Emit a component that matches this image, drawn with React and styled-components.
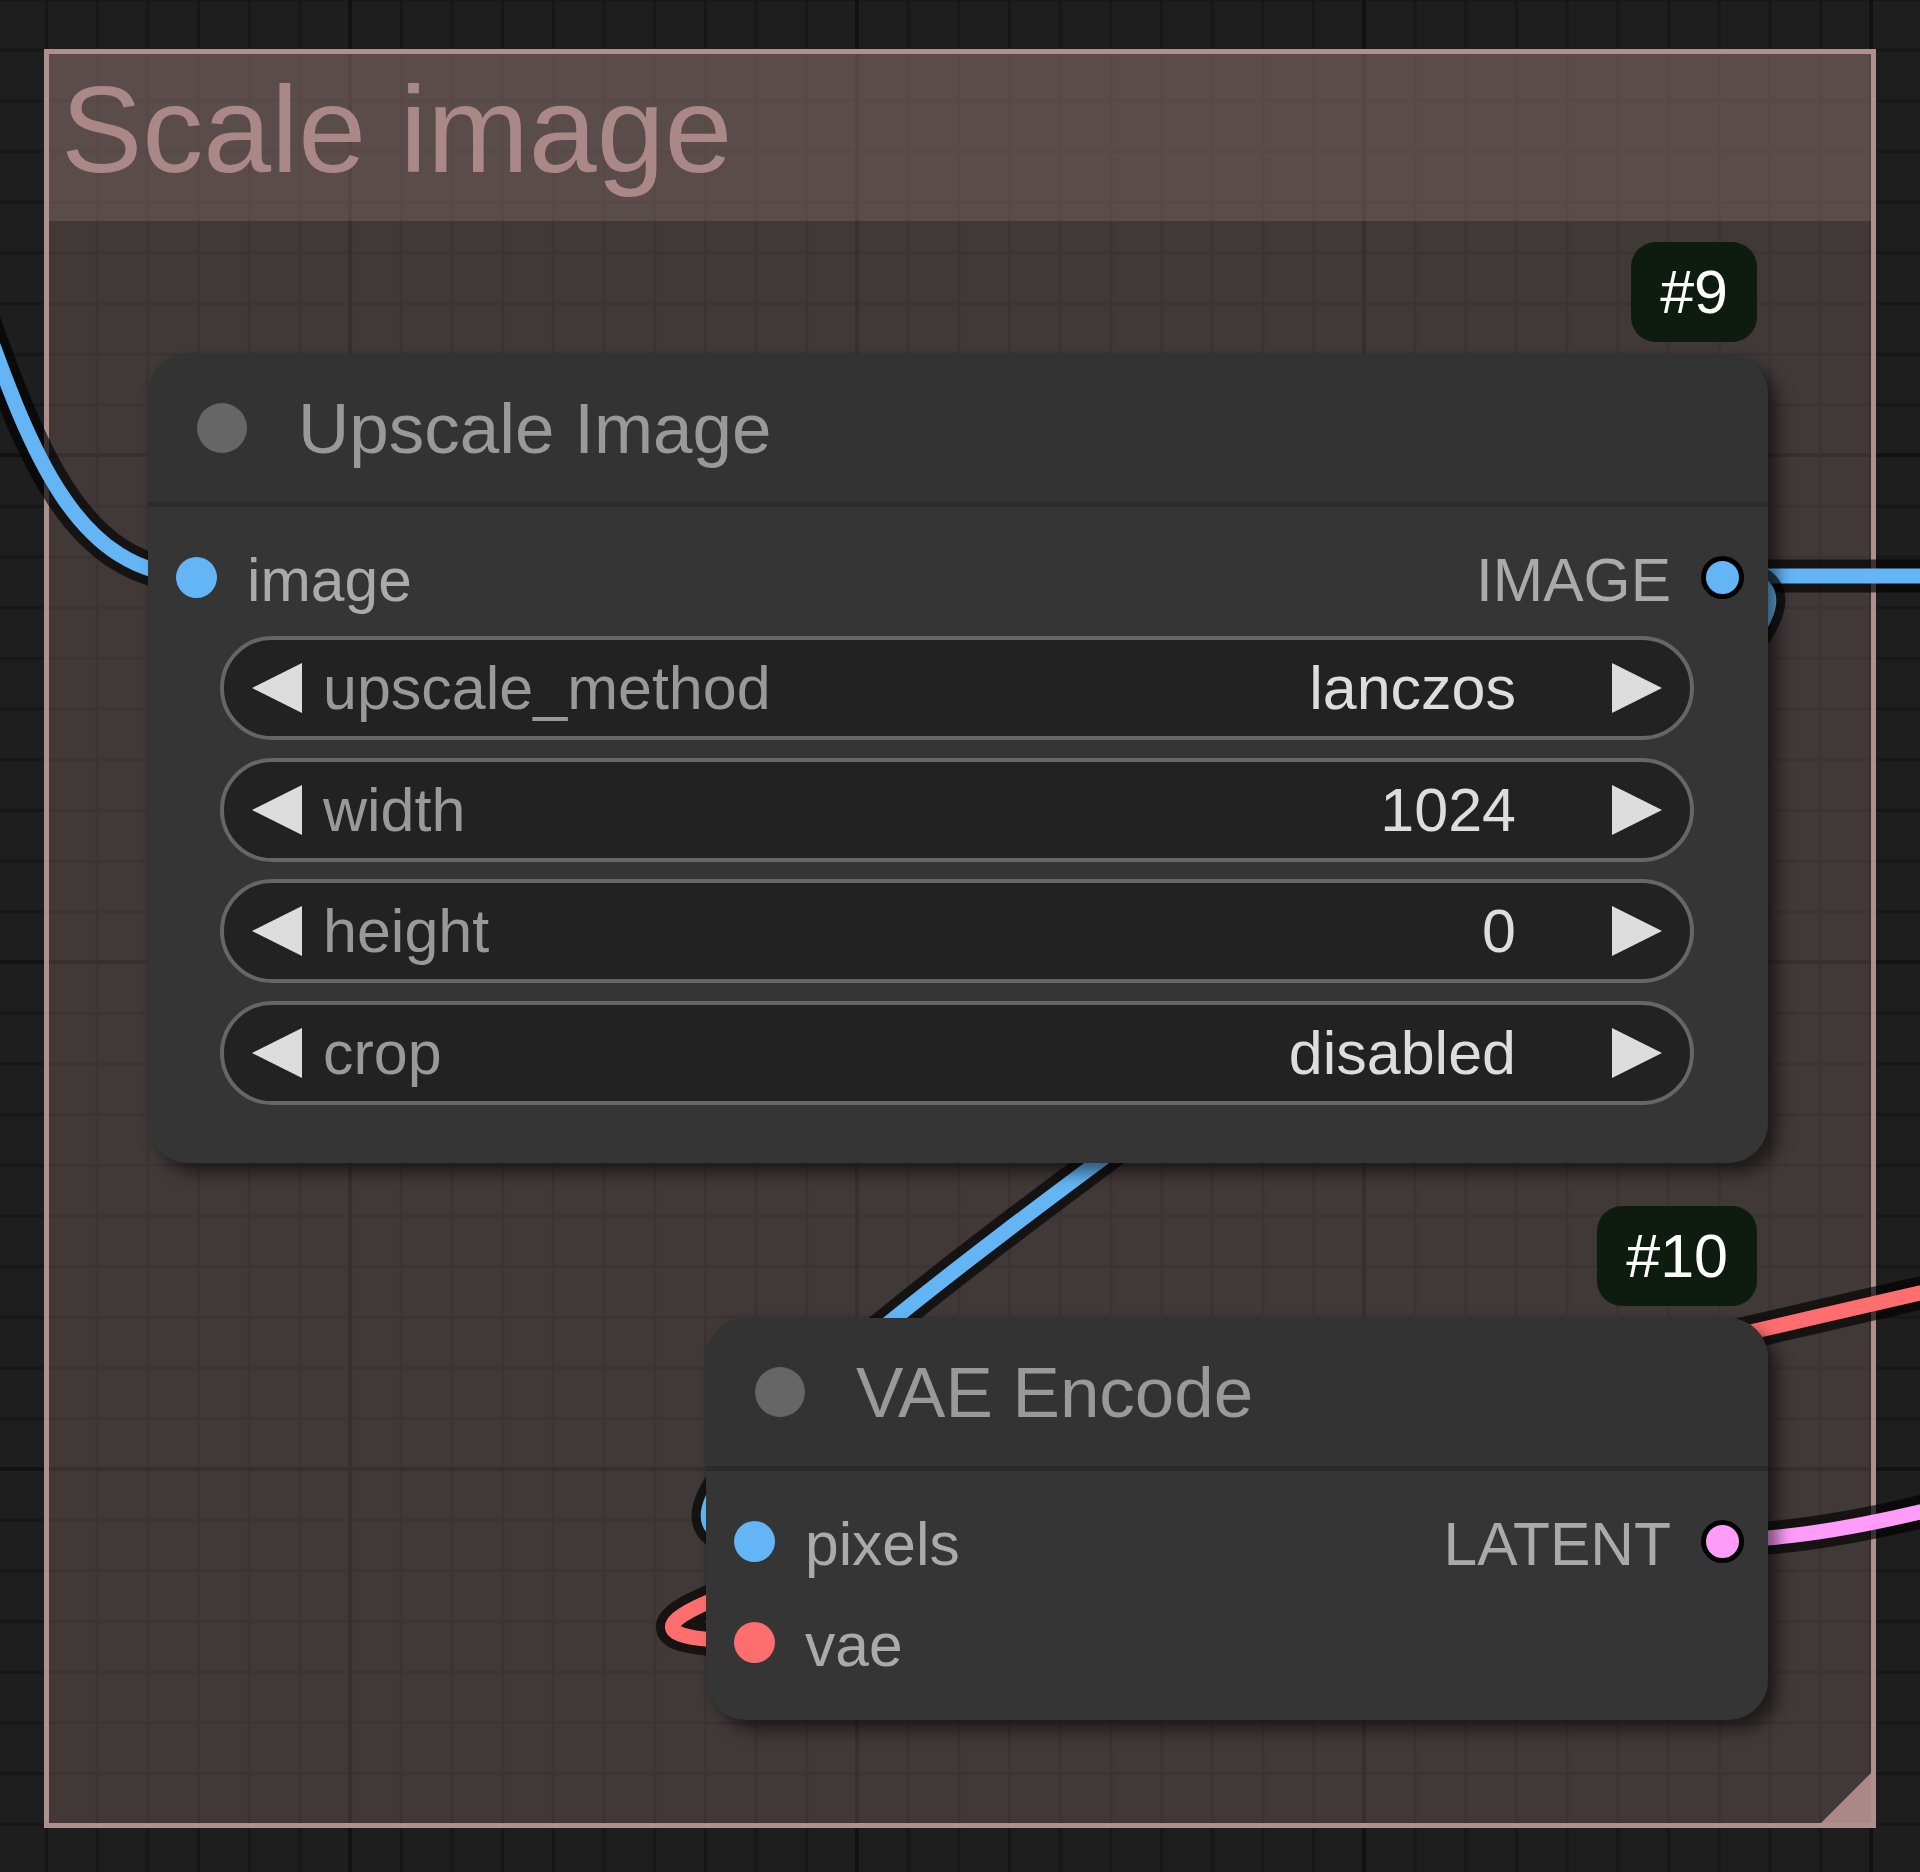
import React from 'react';
import styled, { createGlobalStyle } from 'styled-components';

const BLUE = '#64b5f6';
const RED = '#ff6e6e';
const PINK = '#ff9cf9';

const GlobalStyle = createGlobalStyle`
  html, body {
    margin: 0;
    padding: 0;
    background: #1e1e1e;
  }
  * {
    box-sizing: border-box;
  }
`;

// litegraph style bezier between two slots
const linkPath = (a, b) => {
  const d = Math.hypot(b[0] - a[0], b[1] - a[1]) * 0.25;
  return `M ${a[0]} ${a[1]} C ${a[0] + d} ${a[1]}, ${b[0] - d} ${b[1]}, ${b[0]} ${b[1]}`;
};

const links = [
  // comes in from a node off screen, only the tail is visible
  { path: 'M -40 255 C 20 415, 60 576, 196 576', color: BLUE },
  { from: [1722, 576], to: [2800, 576], color: BLUE },
  { from: [1722, 576], to: [755, 1540], color: BLUE },
  { from: [3500, 850], to: [755, 1641], color: RED },
  { from: [1722, 1540], to: [3000, 1200], color: PINK },
];

const nodes = [
  {
    id: 9,
    title: 'Upscale Image',
    x: 148,
    y: 354,
    w: 1620,
    padBottom: 58,
    inputs: [{ name: 'image', color: BLUE }],
    outputs: [{ name: 'IMAGE', color: BLUE }],
    widgets: [
      { name: 'upscale_method', value: 'lanczos' },
      { name: 'width', value: '1024' },
      { name: 'height', value: '0' },
      { name: 'crop', value: 'disabled' },
    ],
  },
  {
    id: 10,
    title: 'VAE Encode',
    x: 706,
    y: 1318,
    w: 1062,
    padBottom: 27,
    inputs: [
      { name: 'pixels', color: BLUE },
      { name: 'vae', color: RED },
    ],
    outputs: [{ name: 'LATENT', color: PINK }],
    widgets: [],
  },
];

const Arrow = ({ dir }) => (
  <ArrowSvg viewBox="0 0 50 50" width="50" height="50">
    {dir === 'left' ? (
      <polygon points="50,0 50,50 0,25" fill="#dddddd" />
    ) : (
      <polygon points="0,0 0,50 50,25" fill="#dddddd" />
    )}
  </ArrowSvg>
);

const Node = ({ node }) => {
  const rows = Math.max(node.inputs.length, node.outputs.length);
  return (
    <NodeBox style={{ left: node.x, top: node.y, width: node.w }}>
      <Badge>#{node.id}</Badge>
      <NodeTitle>
        <TitleDot />
        <TitleText>{node.title}</TitleText>
      </NodeTitle>
      <NodeBody $padBottom={node.padBottom}>
        {Array.from({ length: rows }).map((_, i) => {
          const input = node.inputs[i];
          const output = node.outputs[i];
          return (
            <SlotRow key={i}>
              <SlotSide>
                {input && (
                  <>
                    <InputDot $color={input.color} />
                    <SlotLabel>{input.name}</SlotLabel>
                  </>
                )}
              </SlotSide>
              <SlotSide>
                {output && (
                  <>
                    <SlotLabel>{output.name}</SlotLabel>
                    <OutputDot $color={output.color} />
                  </>
                )}
              </SlotSide>
            </SlotRow>
          );
        })}
        {node.widgets.length > 0 && (
          <Widgets>
            {node.widgets.map((w) => (
              <Widget key={w.name}>
                <Arrow dir="left" />
                <WidgetLabel>{w.name}</WidgetLabel>
                <WidgetValue>{w.value}</WidgetValue>
                <Arrow dir="right" />
              </Widget>
            ))}
          </Widgets>
        )}
      </NodeBody>
    </NodeBox>
  );
};

export default function App() {
  return (
    <>
      <GlobalStyle />
      <Canvas>
        <Group>
          <GroupTitle>Scale image</GroupTitle>
          <ResizeCorner />
        </Group>
        <Wires width="1920" height="1872" viewBox="0 0 1920 1872">
          {links.map((l, i) => {
            const d = l.path || linkPath(l.from, l.to);
            return (
              <g key={i}>
                <path d={d} stroke="rgba(0,0,0,0.65)" strokeWidth="33" fill="none" />
                <path d={d} stroke={l.color} strokeWidth="15" fill="none" />
              </g>
            );
          })}
        </Wires>
        {nodes.map((n) => (
          <Node key={n.id} node={n} />
        ))}
      </Canvas>
    </>
  );
}

const Canvas = styled.div`
  position: relative;
  width: 1920px;
  height: 1872px;
  overflow: hidden;
  font-family: 'Liberation Sans', Arial, sans-serif;
  background-color: #1e1e1e;
  background-image:
    linear-gradient(90deg, #121212 4px, transparent 4px),
    linear-gradient(180deg, #121212 4px, transparent 4px),
    linear-gradient(90deg, #171717 3px, transparent 3px),
    linear-gradient(180deg, #171717 3px, transparent 3px);
  background-size: 507px 100%, 100% 507px, 50.7px 100%, 100% 50.7px;
  background-position: 348px 0, 0 453px, 45px 0, 0 -2px;
`;

const Group = styled.div`
  position: absolute;
  left: 44px;
  top: 49px;
  width: 1832px;
  height: 1779px;
  border: 5px solid #b08f8f;
  background: rgba(170, 136, 136, 0.25);
  z-index: 0;
`;

const GroupTitle = styled.div`
  height: 167px;
  padding: 15px 0 0 12px;
  background: rgba(170, 136, 136, 0.25);
  color: #aa8888;
  font-size: 122px;
  line-height: 1;
  white-space: nowrap;
`;

const ResizeCorner = styled.div`
  position: absolute;
  right: 0;
  bottom: 0;
  width: 50px;
  height: 50px;
  background: #aa8888;
  clip-path: polygon(100% 0, 100% 100%, 0 100%);
`;

const Wires = styled.svg`
  position: absolute;
  left: 0;
  top: 0;
  z-index: 1;
  pointer-events: none;
`;

const NodeBox = styled.div`
  position: absolute;
  z-index: 2;
  background: #353535;
  border-radius: 40px;
  box-shadow: 10px 10px 15px rgba(0, 0, 0, 0.5);
`;

const Badge = styled.div`
  position: absolute;
  right: 11px;
  bottom: calc(100% + 12px);
  height: 100px;
  padding: 0 29px;
  display: flex;
  align-items: center;
  border-radius: 25px;
  background: #0e1c0f;
  color: #ffffff;
  font-size: 61px;
  white-space: nowrap;
`;

const NodeTitle = styled.div`
  height: 153px;
  display: flex;
  align-items: center;
  padding-left: 49px;
  gap: 51px;
  background: #333333;
  border-radius: 40px 40px 0 0;
  border-bottom: 5px solid #2b2b2b;
`;

const TitleDot = styled.div`
  width: 50px;
  height: 50px;
  border-radius: 50%;
  background: #666666;
  flex: none;
`;

const TitleText = styled.div`
  color: #999999;
  font-size: 71px;
  line-height: 1;
  white-space: nowrap;
`;

const NodeBody = styled.div`
  padding: 20px 0 ${(p) => p.$padBottom}px;
  display: flex;
  flex-direction: column;
`;

const SlotRow = styled.div`
  height: 101px;
  display: flex;
  align-items: center;
  justify-content: space-between;
  padding: 0 24px 0 28px;
`;

const SlotSide = styled.div`
  display: flex;
  align-items: center;
  gap: 30px;
`;

const InputDot = styled.div`
  width: 41px;
  height: 41px;
  border-radius: 50%;
  background: ${(p) => p.$color};
  flex: none;
`;

const OutputDot = styled.div`
  width: 43px;
  height: 43px;
  border-radius: 50%;
  border: 5px solid #000000;
  background: ${(p) => p.$color};
  flex: none;
`;

const SlotLabel = styled.span`
  color: #aaaaaa;
  font-size: 60.5px;
  padding-top: 5px;
  white-space: nowrap;
`;

const Widgets = styled.div`
  margin: 8px 74px 0 72px;
  display: flex;
  flex-direction: column;
  gap: 17.7px;
`;

const Widget = styled.div`
  height: 104px;
  display: flex;
  align-items: center;
  padding: 0 28px 0 28px;
  border: 4px solid #666666;
  border-radius: 52px;
  background: #222222;
  font-size: 61px;
  white-space: nowrap;
`;

const ArrowSvg = styled.svg`
  flex: none;
  display: block;
`;

const WidgetLabel = styled.span`
  flex: 1;
  margin-left: 21px;
  color: #999999;
`;

const WidgetValue = styled.span`
  margin-right: 96px;
  color: #dddddd;
`;
